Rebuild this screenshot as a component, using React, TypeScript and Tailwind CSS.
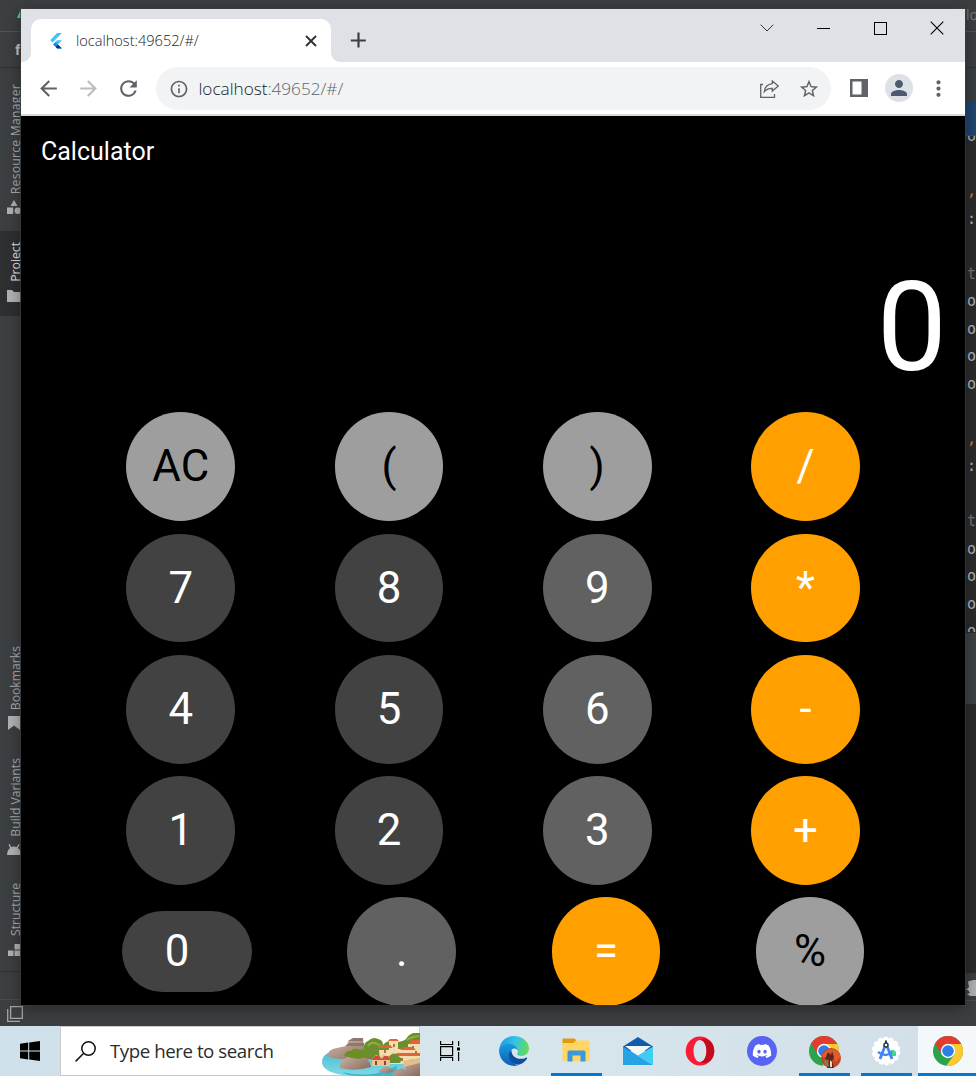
import React from "react";
import {
  MdArrowBack,
  MdArrowForward,
  MdRefresh,
  MdInfoOutline,
  MdStarOutline,
  MdPerson,
  MdMoreVert,
} from "react-icons/md";
import { FaDiscord } from "react-icons/fa";

type Tone = "light" | "dark" | "mid" | "orange";

const tones: Record<Tone, string> = {
  light: "bg-[#9e9e9e] text-black",
  dark: "bg-[#424242] text-white",
  mid: "bg-[#616161] text-white",
  orange: "bg-[#ffa000] text-white",
};

const keys: [string, Tone][] = [
  ["AC", "light"], ["(", "light"], [")", "light"], ["/", "orange"],
  ["7", "dark"], ["8", "dark"], ["9", "mid"], ["*", "orange"],
  ["4", "dark"], ["5", "dark"], ["6", "mid"], ["-", "orange"],
  ["1", "dark"], ["2", "dark"], ["3", "mid"], ["+", "orange"],
];

function Key({ label, tone }: { label: string; tone: Tone }) {
  return (
    <button className={`flex size-[108.75px] items-center justify-center rounded-full pt-px text-[43.75px] leading-none ${tones[tone]}`}>
      {label}
    </button>
  );
}

function Calculator() {
  return (
    <main className="flex flex-1 flex-col overflow-hidden bg-black font-['Roboto',sans-serif] text-white">
      <h1 className="pt-[21px] pl-[20px] text-[25px] leading-[30px]">Calculator</h1>
      <div className="mt-[88px] pr-[18px] text-right text-[125px] leading-[146px]">0</div>
      <div className="mt-[11.25px] ml-[55.6px] grid w-[833px] grid-cols-4 justify-items-center gap-y-[12.5px]">
        {keys.map(([label, tone]) => (
          <Key key={label} label={label} tone={tone} />
        ))}
      </div>
      <div className="mt-[12.5px] ml-[101.2px] flex shrink-0 items-center gap-[95.3px]">
        <button className="flex h-[81.25px] w-[130px] items-center rounded-full bg-[#424242] pl-[42.5px] text-[43.75px] leading-none">0</button>
        <Key label="." tone="mid" />
        <Key label="=" tone="orange" />
        <Key label="%" tone="light" />
      </div>
    </main>
  );
}

function FlutterMark() {
  return (
    <svg viewBox="0 0 16 20" className="h-[16px] w-[13px]">
      <path d="M10 0h6L4.5 12 1.5 9z" fill="#42c3f7" />
      <path d="M10 9h6l-5 5.3 5 5.2h-6L5 14.3z" fill="#42c3f7" />
      <path d="M8 17.2l3-2.9 5 5.2h-6z" fill="#0d2f86" />
      <path d="M5 14.3l3-3 3 3-3 3z" fill="#1e88e5" />
    </svg>
  );
}

function TabStrip() {
  return (
    <div className="flex h-[53px] shrink-0 bg-[#dee1e6] pt-[10px] text-[#202124]">
      <div className="flex w-[10px] items-end bg-white">
        <div className="h-full w-full rounded-br-[9px] bg-[#dee1e6]" />
      </div>
      <div className="flex w-[300px] items-center rounded-t-[10px] bg-white pl-[18px]">
        <FlutterMark />
        <span className="ml-[14px] w-[229px] text-[14.6px] font-light tracking-[-0.02px]">localhost:49652/#/</span>
        <svg viewBox="0 0 12 12" className="size-[12px]" stroke="#303236" strokeWidth="1.9">
          <path d="M1 1l10 10M11 1L1 11" />
        </svg>
      </div>
      <div className="flex w-[10px] bg-white">
        <div className="h-full w-full rounded-bl-[9px] bg-[#dee1e6]" />
      </div>
      <svg viewBox="0 0 16 16" className="mt-[13px] ml-[9px] size-[16px]" stroke="#3c4043" strokeWidth="2.2">
        <path d="M8.500 .5v15M.8 8.500h15" />
      </svg>
      <div className="mt-[1px] ml-auto flex h-[16px] items-center">
        <svg viewBox="0 0 14 8" className="mr-[43.5px] h-[8px] w-[14px]" fill="none" stroke="#333">
          <path d="M.7.7L7 7 13.3.7" />
        </svg>
        <div className="mr-[43.5px] h-px w-[13px] bg-black" />
        <div className="mr-[43.5px] size-[13px] border border-black" />
        <svg viewBox="0 0 14 14" className="mr-[21px] size-[14px]" stroke="#000" strokeWidth="1.1">
          <path d="M.7.7l12.6 12.6M13.3.7L.7 13.3" />
        </svg>
      </div>
    </div>
  );
}

function Toolbar() {
  return (
    <div className="flex h-[52px] shrink-0 items-center bg-white text-[#5f6368]">
      <MdArrowBack className="ml-[15px] size-[25px]" />
      <MdArrowForward className="ml-[15px] size-[25px] text-[#babcbe]" />
      <MdRefresh className="ml-[15px] size-[25px]" />
      <div className="mt-[1px] ml-[15px] flex h-[43px] w-[675px] items-center rounded-full bg-[#f1f3f4] pr-[11px] pl-[12.5px]">
        <MdInfoOutline className="size-[20px]" />
        <span className="ml-[10px] text-[17.2px] font-light tracking-[-0.02px] text-[#5f6368]">
          <span className="text-[#202124]">localhost</span>:49652/#/
        </span>
        <svg viewBox="0 0 19 18" className="ml-auto h-[18px] w-[19px]" fill="none" stroke="#5f6368" strokeWidth="1.3">
          <path d="M3 4.5H.7v12.8h13.8v-3.2" />
          <path d="M12.3.9l6 5.1-6 5.1V8.3c-3.700 0-6 .8-8 3.200.6-4.700 3.400-7.200 8-7.800z" />
        </svg>
        <MdStarOutline className="ml-[19px] size-[22px]" />
      </div>
      <svg viewBox="0 0 18 18" className="ml-[18.5px] size-[18px]">
        <path d="M0 0h18v18H0z" fill="#5f6368" />
        <path d="M2.500 2.500h9v13h-9z" fill="#fff" />
      </svg>
      <div className="ml-[17.5px] flex size-[28px] items-center justify-center rounded-full bg-[#dee1e6] text-[#4d5b6f]">
        <MdPerson className="size-[24px]" />
      </div>
      <MdMoreVert className="ml-[13px] size-[25px]" />
    </div>
  );
}

function RailText({ children }: { children: string }) {
  return <span className="rotate-180 whitespace-nowrap text-[12.2px] leading-[14px] [writing-mode:vertical-rl]">{children}</span>;
}

function LeftRail() {
  return (
    <aside className="flex w-[24px] shrink-0 flex-col text-[#a9abad]">
      <div className="flex h-[32px] shrink-0 justify-end border-b border-[#515355] pt-[9px] pr-[3px]">
        <svg viewBox="0 0 8 10" className="h-[10px] w-[8px]"><path d="M4 9L8 0v9z" fill="#3ddc84" /></svg>
      </div>
      <div className="h-[36px] shrink-0 border-b border-[#2f3133] pt-[9px] pl-[15px] text-[14px] leading-[18px] font-bold text-[#c3c5c7]">f</div>
      <div className="flex h-[163px] shrink-0 flex-col pt-[16px] pl-[9px]">
        <div className="flex h-[110px] items-end tracking-[0.25px]"><RailText>Resource Manager</RailText></div>
        <svg viewBox="0 0 14 14" className="mt-[6px] -ml-[2px] size-[14px] shrink-0" fill="#afb1b3">
          <path d="M7 0l3.500 6h-7zM0 7.500h6.200V14H0z" /><circle cx="10.800" cy="10.800" r="3.200" />
        </svg>
      </div>
      <div className="flex h-[85px] shrink-0 flex-col bg-[#2d2f30] pt-[10px] pl-[9px] text-[#e0e0e0]">
        <div className="flex h-[41px] items-end"><RailText>Project</RailText></div>
        <svg viewBox="0 0 14 12" className="mt-[8px] -ml-[2px] h-[12px] w-[14px]" fill="#afb1b3"><path d="M0 0h5l2 2h7v10H0z" /></svg>
      </div>
      <div className="flex h-[656px] shrink-0 flex-col border-b border-[#2f3133] pt-[330px] pl-[9px]">
        <div className="flex h-[64px] shrink-0 items-end"><RailText>Bookmarks</RailText></div>
        <svg viewBox="0 0 12 14" className="mt-[6px] -ml-[1px] h-[14px] w-[12px] shrink-0" fill="#afb1b3"><path d="M0 0h12v14L6 9.500 0 14z" /></svg>
        <div className="mt-[27px] flex h-[80px] shrink-0 items-end"><RailText>Build Variants</RailText></div>
        <svg viewBox="0 0 14 11" className="mt-[7px] -ml-[2px] h-[11px] w-[14px] shrink-0" fill="#afb1b3"><path d="M0 11q.3-5 3-7L1.500.5l1-.5L4.300 3q2.700-1 5.400 0L11.500 0l1 .5L11 4q2.700 2 3 7z" /></svg>
        <div className="mt-[29px] flex h-[52px] shrink-0 items-end"><RailText>Structure</RailText></div>
        <svg viewBox="0 0 12 12" className="mt-[8px] -ml-[1px] size-[12px] shrink-0" fill="#afb1b3"><path d="M6.500 0H12v5.500H6.500zM0 6.500h5.500V12H0zM6.500 6.500H12V12H6.500z" /></svg>
      </div>
      <div className="h-[28px] shrink-0 border-b border-[#4a4c4e]" />
      <svg viewBox="0 0 16 16" className="mt-[6px] ml-[7px] size-[16px] shrink-0" fill="none" stroke="#a4a6a8" strokeWidth="1.300">
        <path d="M3.600.6h11.700v11.700H3.600zM.7 3v12.300H13" />
      </svg>
    </aside>
  );
}

const codeRows: [string, string][] = [
  ["o", "text-[#a9b7c6]"], ["", ""], [",", "text-[#cc7832]"], [":", "text-[#a9b7c6]"], ["", ""],
  ["t", "text-[#72737a]"], ["o", "text-[#a9b7c6]"], ["o", "text-[#a9b7c6]"], ["o", "text-[#a9b7c6]"], ["o", "text-[#a9b7c6]"],
  ["", ""], [",", "text-[#cc7832]"], [":", "text-[#a9b7c6]"], ["", ""],
  ["t", "text-[#72737a]"], ["o", "text-[#a9b7c6]"], ["o", "text-[#a9b7c6]"], ["o", "text-[#a9b7c6]"], ["o", "text-[#a9b7c6]"],
];

function RightStrip() {
  return (
    <aside className="flex w-[11px] shrink-0 flex-col overflow-hidden">
      <div className="h-[32px] shrink-0 border-b border-[#515355] pt-[4px] pl-[1px] text-[14px] text-[#77797b]">lo</div>
      <div className="h-[36px] shrink-0 border-b border-[#2f3133]" />
      <div className="h-[33px] shrink-0" />
      <div className="h-[34px] shrink-0 bg-[#214470]" />
      <div className="h-[497px] shrink-0 overflow-hidden border-t border-[#4a4c4e] bg-[#2b2b2b]">
        <div className="-mt-[13px] pl-[2px] font-['DejaVu_Sans_Mono',monospace] text-[15px]">
          {codeRows.map(([c, color], i) => (
            <div key={i} className={`h-[27.5px] leading-[27.5px] ${color}`}>{c}</div>
          ))}
        </div>
      </div>
      <div className="h-[73px] shrink-0 border-y border-[#2a2c2e] bg-[#3e4143]" />
      <div className="h-[268px] shrink-0 bg-[#2b2b2b]" />
      <div className="h-[28px] shrink-0 border-b border-[#4a4c4e] pt-[7px]">
        <svg viewBox="0 0 11 16" className="h-[16px] w-[11px]" fill="#afb1b3"><path d="M3 1.500L8 0h3v16H5l-3-2 3-1-2-3H1l3-3z" /></svg>
      </div>
    </aside>
  );
}

function Chrome({ id }: { id: string }) {
  return (
    <svg viewBox="0 0 30 30" className="size-[30px]">
      <defs><clipPath id={id}><circle cx="15" cy="15" r="15" /></clipPath></defs>
      <g clipPath={`url(#${id})`}>
        <path d="M0 0h30v30H0z" fill="#2ba24c" />
        <path d="M15 8h15v22H13l8.500-11.500z" fill="#fdc92e" />
        <path d="M0 0h30v8H15a7 7 0 0 0-6.200 10.300L2 7z" fill="#e33b2e" />
      </g>
      <circle cx="15" cy="15" r="7.200" fill="#fff" />
      <circle cx="15" cy="15" r="5.800" fill="#2f7de9" />
    </svg>
  );
}

function Edge() {
  return (
    <svg viewBox="0 0 30 30" className="size-[30px]">
      <defs>
        <linearGradient id="edgeTop" x1="0" y1="0.300" x2="1" y2="0.500">
          <stop offset="0" stopColor="#1c9de0" /><stop offset=".5" stopColor="#33c3e8" /><stop offset="1" stopColor="#66dd54" />
        </linearGradient>
        <linearGradient id="edgeLeft" x1="0" y1="0" x2="0" y2="1">
          <stop offset="0" stopColor="#1a9be0" /><stop offset="1" stopColor="#0c5fb8" />
        </linearGradient>
      </defs>
      <path d="M.3 13C1.500 5 7.500 0 15 0c8.500 0 15 6 15 12.500 0 4.500-3.500 7.500-7.500 7.500-3 0-4.500-1-4.500-2 0-.8 1-1 1-3C19 11 15 8 10.500 8 5 8 1.500 11 .3 13z" fill="url(#edgeTop)" />
      <path d="M.2 13C1.500 10 5 7.500 9.500 7.500c5 0 9.500 3.500 9.500 7.500-.5-1.500-2-2.500-3.500-2.500-3 0-5 3-4.500 7 .6 5 4 9 8 10C9 32-1 24 .2 13z" fill="url(#edgeLeft)" />
      <path d="M12.500 14c-3 2-3.500 7-.5 11 3 4 8 4.500 11 2.500 2-1.200 4-3 5-5 .4-.8-.2-1.200-1-.8C20 25 12 21 12.500 14z" fill="#0c4fa0" />
    </svg>
  );
}

function SeasideArt() {
  return (
    <svg viewBox="0 0 98 43" className="h-[43px] w-[98px]">
      <defs>
        <linearGradient id="sea" x1="0" y1="0" x2="0" y2="1"><stop offset="0" stopColor="#45b9cf" /><stop offset="1" stopColor="#7fdbe6" /></linearGradient>
        <linearGradient id="rock" x1="0" y1="0" x2="1" y2="1"><stop offset="0" stopColor="#d5bfb0" /><stop offset="1" stopColor="#87695f" /></linearGradient>
      </defs>
      <path d="M0 29C0 21 8 18 18 17l80-2v28H30C12 42 0 37 0 29z" fill="url(#sea)" />
      <path d="M5 22q2-6 10-7l9-2 3-6 14-2 1 9 8 3v9H20q-12 0-15-4z" fill="url(#rock)" />
      <path d="M26 8l5-3h10v3zM23 13l5-3h14v3z" fill="#8e786c" />
      <path d="M42 17q-1-7 4-9 5-5 10-2 5 1 5 6 5-6 12-3 8 0 11-3 3-6 14-8v27H45z" fill="#6b8f2c" />
      <path d="M46 13q3-4 7-3t6 4M85 7q4-3 12-4" fill="none" stroke="#93ad45" strokeWidth="2" />
      <path d="M57 17h10V8h9v8h10v-5h12v20H58z" fill="#f3dcae" />
      <path d="M55 15l4-3h9l3 3zM66 8l2-2h7l2 2zM78 17l3-3h10l3 3zM87 11l2-4h9v4zM71 23l4-3h23v3z" fill="#e0633a" />
      <path d="M62 17h2v3h-2zM71 11h2v3h-2zM90 13h2v3h-2zM79 25h2v3h-2zM93 18h2v3h-2z" fill="#a87452" />
      <path d="M66 25q4-6 8-4l6 5-2 4H66z" fill="#6b8f2c" />
      <path d="M50 26l4-4 4 2 4-3 6 4v8H50z" fill="#f1c291" />
      <path d="M49 27l4-4h4l3 3 2-3h4l3 4z" fill="#cf5038" />
      <path d="M53 28h2v4h-2zM62 28h2v4h-2z" fill="#794b41" />
      <path d="M18 33q1-7 6-8l4-4 5-1 4-2 4 2 7 10 1 4q-16 5-31 1z" fill="url(#rock)" />
      <path d="M22 23q2-6 7-5 3-4 8-1 5-2 9 4l1 3-11 2-6-1z" fill="#6b8f25" />
      <path d="M20 39q25 6 45-2l10-4v10H36q-10 0-16-4z" fill="#42b5cd" />
      <path d="M56 39l4-4 3-2 4 1 5 4-6 2z" fill="url(#rock)" />
      <path d="M82 29q8-4 16-3v17H70l2-5 8-3 4 2z" fill="url(#rock)" />
      <path d="M81 28l17-3v5l-16 4z" fill="#e4bd8d" />
    </svg>
  );
}

function TaskIcon({ children, line = false }: { children: React.ReactNode; line?: boolean }) {
  return (
    <div className="flex w-[62px] shrink-0 flex-col items-center">
      <div className="flex h-[47px] items-center pt-[3px]">{children}</div>
      {line && <div className="h-[3px] w-[51px] bg-[#0078d7]" />}
    </div>
  );
}

function Taskbar() {
  return (
    <footer className="flex h-[50px] shrink-0 overflow-hidden bg-linear-to-r from-[#cfe0ea] via-[#d7e6ec] to-[#d3dfe8]">
      <div className="flex w-[60px] shrink-0 items-center justify-center">
        <svg viewBox="0 0 20 20" className="size-[20px]"><path d="M0 2.700L8.200 1.600V9.500H0zM9.200 1.400L20 0v9.500H9.200zM0 10.500h8.200v7.900L0 17.300zM9.200 10.500H20V20L9.200 18.600z" /></svg>
      </div>
      <div className="flex w-[360px] shrink-0 items-center border border-[#c7c9cb] bg-white pl-[14px]">
        <svg viewBox="0 0 21 21" className="size-[21px] shrink-0" fill="none" stroke="#111" strokeWidth="1.500"><circle cx="13.500" cy="7.500" r="6.700" /><path d="M8.700 12.300L.6 20.400" /></svg>
        <span className="ml-[14px] w-[212px] shrink-0 text-[18.700px] tracking-[-0.45px] whitespace-nowrap text-[#2b2b2b]">Type here to search</span>
        <div className="mt-[7px] shrink-0"><SeasideArt /></div>
      </div>
      <div className="flex w-[63px] shrink-0 items-center pl-[20px]">
        <svg viewBox="0 0 21 20" className="h-[20px] w-[21px]" fill="none" stroke="#000" strokeWidth="1.200">
          <path d="M.6 0v3.500h12V0M.6 5.600h12v9H.6zM.6 20v-3.500h12V20M18.600 0v5M18.600 11v9" /><path d="M17 6.500h3v3h-3z" fill="#000" stroke="none" />
        </svg>
      </div>
      <TaskIcon><Edge /></TaskIcon>
      <TaskIcon line>
        <svg viewBox="0 0 28 24" className="-mt-[2px] h-[24px] w-[28px]">
          <path d="M.5 1.500Q.5.500 1.500.5h11l2 2-2 4H.5z" fill="#df9b0d" />
          <path d="M.5 5h11l2.500-2.500h12.500q1 0 1 1V22q0 1-1 1h-25q-1 0-1-1z" fill="#ffd563" />
          <path d="M5.500 23.500V14q0-1.500 1.500-1.500h15q1.500 0 1.500 1.500v9.500h-5v-6h-8v6z" fill="#3c97df" />
        </svg>
      </TaskIcon>
      <TaskIcon>
        <svg viewBox="0 0 30 28" className="h-[28px] w-[30px]">
          <path d="M0 9.500L15 0l15 9.500V14H0z" fill="#0f5cad" /><path d="M2 9h26L15 19z" fill="#f4f6f8" />
          <path d="M0 9.500l30 18.500H0z" fill="#27a2e4" /><path d="M30 9.500V28L14.500 18.700z" fill="#3fcdf4" />
        </svg>
      </TaskIcon>
      <TaskIcon>
        <svg viewBox="0 0 30 30" className="size-[30px]">
          <path fillRule="evenodd" d="M15 .5a14.300 14.500 0 1 0 0 29 14.300 14.500 0 1 0 0-29zM15 4c3.700 0 6.500 4.800 6.500 11S18.700 26 15 26 8.500 21.200 8.500 15 11.300 4 15 4z" fill="#fb1b35" />
          <path d="M15 4c3.700 0 6.500 4.800 6.500 11S18.700 26 15 26c4 2 8 1 10.500-1.500 5-5 5-14 0-19C23 3 19 2 15 4z" fill="#c20c1d" />
        </svg>
      </TaskIcon>
      <TaskIcon>
        <div className="flex size-[30px] items-center justify-center rounded-full bg-[#5865f2] text-white"><FaDiscord className="size-[20px]" /></div>
      </TaskIcon>
      <TaskIcon line>
        <div className="relative">
          <Chrome id="chromeA" />
          <svg viewBox="0 0 20 20" className="absolute top-[12px] left-[12px] size-[20px]">
            <circle cx="10" cy="10" r="10" fill="#c54424" /><path d="M1 9Q3 1 11 1q8 2 8.500 8l-5 5-3-7-5 3z" fill="#e05b2f" />
            <path d="M7 4l3 3 1-4 2 6-2 4 2 7H6l2-8-4-1z" fill="#5a271b" /><path d="M3 12l4 1 1 6q-5-2-5-7z" fill="#7c8056" /><path d="M9 12l2 2v5H9z" fill="#eadccc" />
          </svg>
        </div>
      </TaskIcon>
      <TaskIcon line>
        <svg viewBox="0 0 30 30" className="size-[30px]">
          <circle cx="15" cy="15" r="13" fill="#fff" /><circle cx="15" cy="15" r="13.300" fill="none" stroke="#fff" strokeWidth="2" strokeDasharray="4 2" />
          <path d="M19 15q3-3 6 1v4h-6z" fill="#3ddc84" />
          <path d="M14 10L9 23M16 10l5 13" stroke="#4285f4" strokeWidth="2.800" /><path d="M7 16q8 6 14 0" fill="none" stroke="#4285f4" strokeWidth="2.200" />
          <path d="M14 4.500h2v3h-2z" fill="#263845" /><circle cx="15" cy="9" r="2" fill="#fff" stroke="#263845" strokeWidth="1.500" />
        </svg>
      </TaskIcon>
      <div className="ml-[1px] flex w-[62px] shrink-0 flex-col bg-[#f4f8fa]">
        <div className="flex h-[47px] items-center pt-[3px] pl-[15px]"><Chrome id="chromeB" /></div>
        <div className="h-[3px] bg-[#0078d7]" />
      </div>
    </footer>
  );
}

export default function App() {
  return (
    <div className="flex h-[1076px] w-[976px] flex-col overflow-hidden font-['Open_Sans','Noto_Sans',sans-serif]">
      <div className="relative flex h-[1026px] shrink-0 justify-between overflow-hidden bg-[#3c3f41]">
        <LeftRail />
        <RightStrip />
        <div className="absolute top-[9px] left-[21px] flex h-[996px] w-[944px] flex-col shadow-[0_3px_14px_rgba(0,0,0,0.4),0_0_0_1px_rgba(70,72,74,0.8)]">
          <TabStrip />
          <Toolbar />
          <div className="h-[2px] shrink-0 bg-[#d9dadc]" />
          <Calculator />
        </div>
      </div>
      <Taskbar />
    </div>
  );
}
